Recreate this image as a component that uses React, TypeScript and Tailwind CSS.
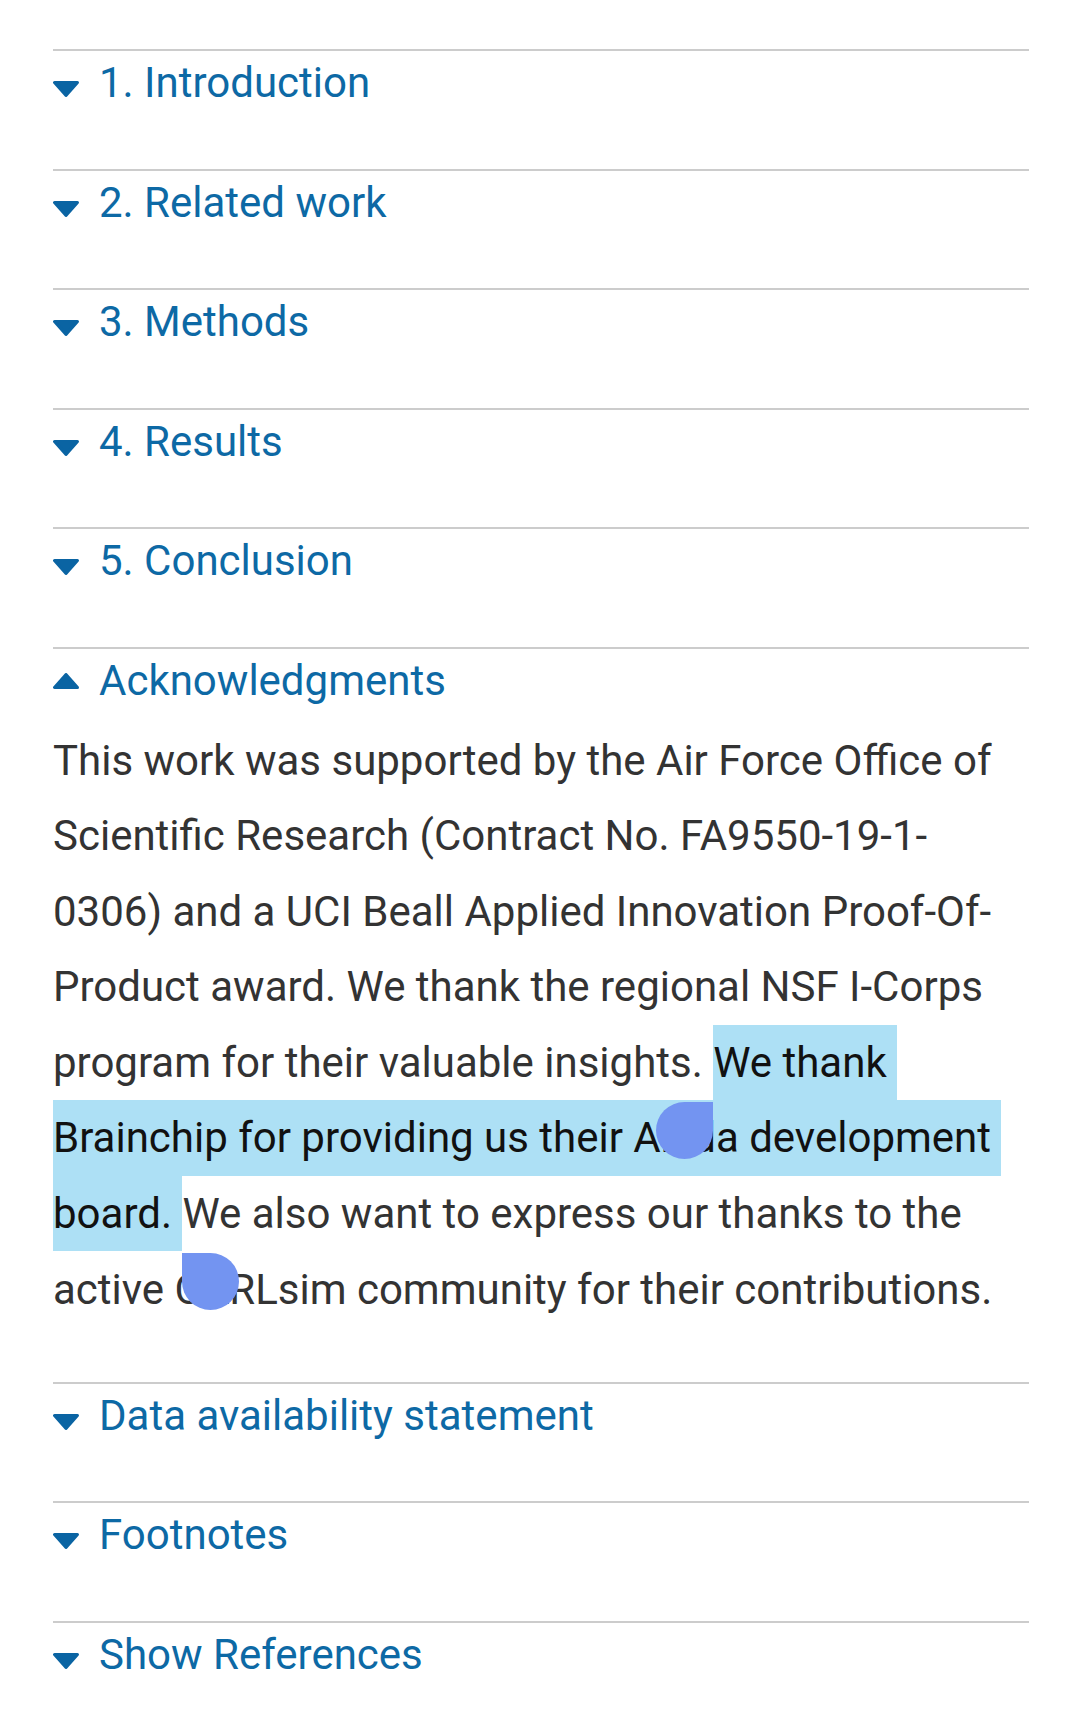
import { useState } from "react";

type Section = { id: string; title: string };

const sections: Section[] = [
  { id: "intro", title: "1. Introduction" },
  { id: "related", title: "2. Related work" },
  { id: "methods", title: "3. Methods" },
  { id: "results", title: "4. Results" },
  { id: "conclusion", title: "5. Conclusion" },
  { id: "ack", title: "Acknowledgments" },
  { id: "data", title: "Data availability statement" },
  { id: "footnotes", title: "Footnotes" },
  { id: "refs", title: "Show References" },
];

const Caret = ({ up }: { up: boolean }) => (
  <svg
    width="26"
    height="16"
    viewBox="0 0 26 16"
    className={up ? "mt-[17px] shrink-0" : "mt-[23px] shrink-0"}
  >
    <path
      d={up ? "M1.5 14.5 H24.5 L13 1.5 Z" : "M1.5 1.5 H24.5 L13 14.5 Z"}
      fill="#0a64a3"
      stroke="#0a64a3"
      strokeWidth="3"
      strokeLinejoin="round"
    />
  </svg>
);

// selection handle: anchored to a zero-width point in the text
const Handle = ({ side }: { side: "start" | "end" }) => (
  <span className="relative inline-block h-0 w-0 align-baseline">
    <span
      className={
        side === "start"
          ? "absolute right-0 top-[25px] z-10 h-[57px] w-[57px] rounded-full rounded-tr-none bg-[#7394f1]"
          : "absolute left-0 top-[25px] z-10 h-[57px] w-[57px] rounded-full rounded-tl-none bg-[#7394f1]"
      }
    />
  </span>
);

const Acknowledgments = () => (
  <p className="mt-[17px] text-[42px] leading-[75.6px] text-[#333333]">
    This work was supported by the Air Force Office of Scientific Research
    (Contract No. FA9550-19-1-<wbr />0306) and a UCI Beall Applied Innovation
    Proof-Of-Product award. We thank the regional NSF I-Corps program for their
    valuable insights.{" "}
    <Handle side="start" />
    <span className="whitespace-break-spaces bg-[#ade0f5] py-[13.2px] text-[#111111]">
      {"We thank Brainchip for providing us their Akida development board. "}
    </span>
    <Handle side="end" />
    We also want to express our thanks to the active CARLsim community for
    their contributions.
  </p>
);

export default function App() {
  const [open, setOpen] = useState<string[]>(["ack"]);

  const toggle = (id: string) => {
    setOpen((prev) =>
      prev.includes(id) ? prev.filter((x) => x !== id) : [...prev, id]
    );
  };

  return (
    <div className="min-h-screen bg-white pl-[53px] pr-[51px] pt-[49px] font-['Roboto',sans-serif]">
      {sections.map((s) => {
        const isOpen = open.includes(s.id);
        return (
          <section
            key={s.id}
            className={
              isOpen
                ? "border-t-2 border-[#cccccc] pb-[54.5px]"
                : "border-t-2 border-[#cccccc] pb-[60.5px]"
            }
          >
            <button
              type="button"
              onClick={() => toggle(s.id)}
              className="flex w-full items-start pt-[7px] text-left"
            >
              <Caret up={isOpen} />
              <span className="ml-[20px] text-[42px] leading-[50px] text-[#0d69a5]">
                {s.title}
              </span>
            </button>
            {isOpen && s.id === "ack" && <Acknowledgments />}
          </section>
        );
      })}
    </div>
  );
}
